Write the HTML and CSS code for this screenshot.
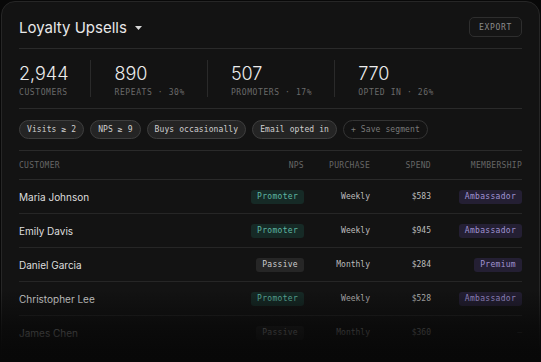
FILE: index.html
```html
<!DOCTYPE html>
<html lang="en">
<head>
    <meta charset="UTF-8">
    <meta name="viewport" content="width=device-width, initial-scale=1.0">
    <title>Loyalty Upsells</title>
    <link rel="stylesheet" href="styles.css">
</head>
<body>
    <div class="card">
        <div class="header">
            <div class="title">
                Loyalty Upsells
                <svg class="caret" width="7" height="4" viewBox="0 0 7 4"><polygon points="0,0 7,0 3.5,4" fill="#d8d8d8"/></svg>
            </div>
            <button class="export">EXPORT</button>
        </div>

        <div class="stats">
            <div class="stat">
                <div class="stat-value">2,944</div>
                <div class="stat-label">CUSTOMERS</div>
            </div>
            <div class="stat">
                <div class="stat-value">890</div>
                <div class="stat-label">REPEATS · 30%</div>
            </div>
            <div class="stat">
                <div class="stat-value">507</div>
                <div class="stat-label">PROMOTERS · 17%</div>
            </div>
            <div class="stat">
                <div class="stat-value">770</div>
                <div class="stat-label">OPTED IN · 26%</div>
            </div>
        </div>

        <div class="chips">
            <span class="chip">Visits ≥ 2</span>
            <span class="chip">NPS ≥ 9</span>
            <span class="chip">Buys occasionally</span>
            <span class="chip">Email opted in</span>
            <span class="chip ghost">+ Save segment</span>
        </div>

        <div class="table">
            <div class="row head">
                <div>CUSTOMER</div>
                <div class="r">NPS</div>
                <div class="r">PURCHASE</div>
                <div class="r">SPEND</div>
                <div class="r">MEMBERSHIP</div>
            </div>
            <div class="row">
                <div class="name">Maria Johnson</div>
                <div class="r"><span class="badge promoter">Promoter</span></div>
                <div class="r mono">Weekly</div>
                <div class="r mono">$583</div>
                <div class="r"><span class="badge member">Ambassador</span></div>
            </div>
            <div class="row">
                <div class="name">Emily Davis</div>
                <div class="r"><span class="badge promoter">Promoter</span></div>
                <div class="r mono">Weekly</div>
                <div class="r mono">$945</div>
                <div class="r"><span class="badge member">Ambassador</span></div>
            </div>
            <div class="row">
                <div class="name">Daniel Garcia</div>
                <div class="r"><span class="badge passive">Passive</span></div>
                <div class="r mono">Monthly</div>
                <div class="r mono">$284</div>
                <div class="r"><span class="badge member">Premium</span></div>
            </div>
            <div class="row">
                <div class="name">Christopher Lee</div>
                <div class="r"><span class="badge promoter">Promoter</span></div>
                <div class="r mono">Weekly</div>
                <div class="r mono">$528</div>
                <div class="r"><span class="badge member">Ambassador</span></div>
            </div>
            <div class="row last">
                <div class="name">James Chen</div>
                <div class="r"><span class="badge passive">Passive</span></div>
                <div class="r mono">Monthly</div>
                <div class="r mono">$360</div>
                <div class="r dash">—</div>
            </div>
        </div>
    </div>
    <div class="fade"></div>
</body>
</html>
```

FILE: styles.css
```css
body {
    margin: 0;
    padding: 1px 0 0 1px;
    background: #080808;
    font-family: Inter, "Noto Sans", sans-serif;
    color: #e6e6e6;
    height: 361px;
    overflow: hidden;
    position: relative;
}

.card {
    width: 503px;
    padding: 0 17px;
    background: #131313;
    border: 1px solid #262626;
    border-radius: 14px;
    height: 420px;
}

.header {
    display: flex;
    justify-content: space-between;
    align-items: center;
    padding: 15px 0 11px;
    border-bottom: 1px solid #2a2a2a;
}

.title {
    font-size: 15px;
    color: #e8e8e8;
    display: flex;
    align-items: center;
    gap: 8px;
}

.caret {
    margin-top: 1px;
}

.export {
    font-family: "DejaVu Sans Mono", monospace;
    font-size: 8px;
    letter-spacing: 0.7px;
    color: #8a8a8a;
    background: #151515;
    border: 1px solid #2e2e2e;
    border-radius: 5px;
    height: 20px;
    padding: 0 9px;
}

.stats {
    display: flex;
    padding: 11px 0;
    border-bottom: 1px solid #2a2a2a;
}

.stat {
    padding: 0 22px 0 23px;
    border-left: 1px solid #2a2a2a;
    height: 37px;
}

.stat:first-child {
    padding-left: 0;
    border-left: none;
}

.stat-value {
    font-size: 18px;
    font-weight: 300;
    line-height: 22px;
    margin-top: 3px;
    color: #ececec;
}

.stat-label {
    font-family: "DejaVu Sans Mono", monospace;
    font-size: 8px;
    letter-spacing: 0.6px;
    color: #6a6a6a;
    margin-top: 3px;
    line-height: 10px;
}

.chips {
    display: flex;
    gap: 6px;
    padding: 11px 0;
    border-bottom: 1px solid #2a2a2a;
}

.chip {
    font-family: "DejaVu Sans Mono", monospace;
    font-size: 8px;
    letter-spacing: 0.1px;
    color: #cfcfcf;
    background: #242424;
    border: 1px solid #3e3e3e;
    border-radius: 10px;
    height: 17px;
    line-height: 17px;
    padding: 0 7px;
}

.chip.ghost {
    background: transparent;
    border-color: #333;
    color: #7a7a7a;
}

.row {
    display: grid;
    grid-template-columns: 1fr 70px 66px 61px 91px;
    align-items: center;
    height: 33px;
    border-bottom: 1px solid #262626;
    font-family: "DejaVu Sans Mono", monospace;
    font-size: 8px;
}

.row.head {
    height: 28px;
    color: #666;
    letter-spacing: 0.3px;
    border-bottom-color: #2a2a2a;
}

.row.head div {
    padding-top: 1px;
}

.row.last {
    border-bottom: none;
}

.r {
    text-align: right;
}

.name {
    font-family: Inter, "Noto Sans", sans-serif;
    font-size: 10px;
    color: #dedede;
}

.mono {
    color: #bdbdbd;
}

.badge {
    display: inline-block;
    height: 14px;
    line-height: 14px;
    padding: 0 6px;
    border-radius: 3px;
    letter-spacing: 0.3px;
}

.promoter {
    background: #162a26;
    color: #5fb8a4;
}

.passive {
    background: #262626;
    color: #cccccc;
}

.member {
    background: #241f33;
    color: #a093d2;
}

.dash {
    color: #555;
}

.fade {
    position: absolute;
    left: 0;
    right: 0;
    bottom: 0;
    height: 72px;
    background: linear-gradient(to bottom, rgba(8, 8, 8, 0) 0%, rgba(8, 8, 8, 0.3) 20%, rgba(8, 8, 8, 0.72) 50%, rgba(8, 8, 8, 0.97) 82%, #080808 100%);
    pointer-events: none;
}
```
